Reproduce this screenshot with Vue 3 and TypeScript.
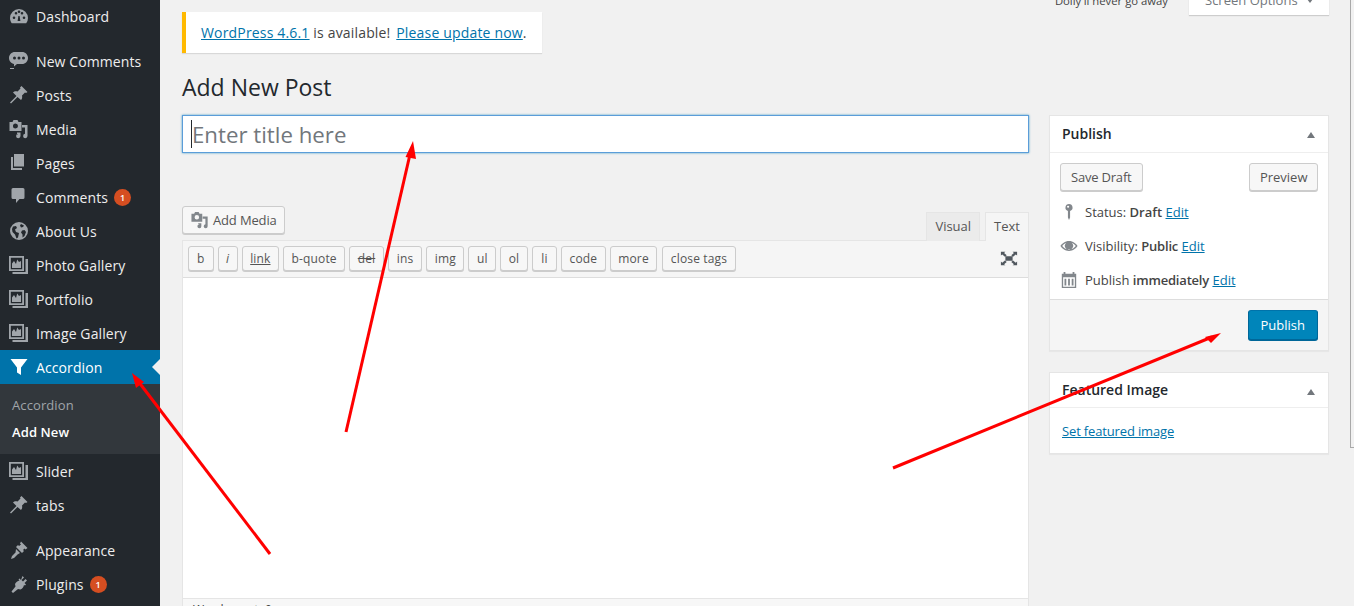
<script setup lang="ts">
type MenuItem = { label: string; icon: string; badge?: number }

const ICONS: Record<string, string> = {
  dash: 'M10 3a9 9 0 0 0-9 9c0 2 .7 3.900 1.800 5.300h14.400A9 9 0 0 0 19 12a9 9 0 0 0-9-9zM5 13a1.300 1.300 0 1 1 0-2.600A1.300 1.300 0 0 1 5 13zm2-4.400a1.300 1.300 0 1 1 0-2.600 1.300 1.300 0 0 1 0 2.600zM10 7a1.300 1.300 0 1 1 0-2.600A1.300 1.300 0 0 1 10 7zm1.400 8H8.600l.8-5h1.200zM13 8.600A1.300 1.300 0 1 1 13 6a1.300 1.300 0 0 1 0 2.600zM15 13a1.300 1.300 0 1 1 0-2.600A1.300 1.300 0 0 1 15 13z',
  bubble: 'M6 1h7c3.500 0 6 2.700 6 6s-2.500 6-6 6H8l-3 2.500V13C2.500 12.500 0 10.300 0 7s2.500-6 6-6zm-.5 4.500a1.500 1.500 0 1 0 0 3 1.500 1.500 0 0 0 0-3zm4.500 0a1.500 1.500 0 1 0 0 3 1.500 1.500 0 0 0 0-3zm4.500 0a1.500 1.500 0 1 0 0 3 1.500 1.500 0 0 0 0-3zM1 17h4v1H1z',
  pin: 'M12.500 1l6 6-1.500 1-1-.5-3 3c.5 2 0 3.500-1 4.500L8.500 12 2 18.500l-1-1L7.500 11 4 7.500C5 6.500 6.500 6 8.500 6.500l3-3-.5-1z',
  media: 'M.5 3h3l1-2h4l1 2h3v9H.5zm6 1.500a2.500 2.500 0 1 0 0 5 2.500 2.500 0 0 0 0-5zM13 6h5.500v11a2.200 2.200 0 1 1-2.500-2.200V8.500h-3zM8 13.500h3.500v3.500a2.200 2.200 0 1 1-2.500-2.200v.7H8z',
  pages: 'M5 1h10v12.500H5zM2 4h2v11h9v2H2z',
  comment: 'M4 1h10a1.500 1.500 0 0 1 1.500 1.500v8A1.500 1.500 0 0 1 14 12h-3.500L7 16v-4H4a1.500 1.500 0 0 1-1.500-1.500v-8A1.500 1.500 0 0 1 4 1z',
  globe: 'M10 1a9 9 0 1 0 0 18 9 9 0 0 0 0-18zM4 5.500l3-.5 1 2-2 1.500 1 2.500 3 1-1 4.500-1.500 1-1.500-4-2.500-2.500-.5-3zM12 3l3 1.500-1 1.500-2 .5-1-2zm3.500 6l1.500 2-1.500 4-2 1.500v-3l-1.500-2 1-2z',
  gallery: 'M0 1h15v15H0zm1.800 1.800v11.400h11.400V2.800zM3 13V8.500l2-2.500 2 3 1.200-4.500L10 7l2-1v7zm13.500-9H19v15H3.500v-2h13z',
  funnel: 'M1.500 2h17L12 10.500V18l-4-2.500v-5z',
  brush: 'M12 1.500l6.500 6.500-2 1.500-1-1-1.500 1.500 1 1-2 2-6-6 2-2 1 1L12 4.500l-1-1zM7 9l4 4-2.500 1.500L5 18l-3 1 1-3 3.500-3.500z',
  plug: 'M13.500 2L15 3.500 12.500 6 14 7.500 16.500 5 18 6.500 15.500 9 17 10.500l-1 1L15 11c-.5 2-1.500 3.500-3.500 4.500L9 15l-5 4-1.500-1.500 4-5L6 10c1-2 2.500-3 4.500-3.500l-1-1 1-1L12 6z',
}

const topItems: MenuItem[] = [
  { label: 'New Comments', icon: 'bubble' },
  { label: 'Posts', icon: 'pin' },
  { label: 'Media', icon: 'media' },
  { label: 'Pages', icon: 'pages' },
  { label: 'Comments', icon: 'comment', badge: 1 },
  { label: 'About Us', icon: 'globe' },
  { label: 'Photo Gallery', icon: 'gallery' },
  { label: 'Portfolio', icon: 'gallery' },
  { label: 'Image Gallery', icon: 'gallery' },
]
const afterItems: MenuItem[] = [
  { label: 'Slider', icon: 'gallery' },
  { label: 'tabs', icon: 'pin' },
]
const bottomItems: MenuItem[] = [
  { label: 'Appearance', icon: 'brush' },
  { label: 'Plugins', icon: 'plug', badge: 1 },
]

const quicktags = ['b', 'i', 'link', 'b-quote', 'del', 'ins', 'img', 'ul', 'ol', 'li', 'code', 'more', 'close tags']

const arrows = [
  { line: '346,432 411,150', head: '413,141 405.500,157 416,159' },
  { line: '270,554 138,381', head: '132,373 136,388 144,382' },
  { line: '893,468 1212,337', head: '1221,333 1205,337 1211,343' },
]
</script>

<template>
  <div class="page">
    <aside class="sidebar">
      <div class="menu-item first">
        <svg class="mi" viewBox="0 0 20 20"><path :d="ICONS.dash" fill-rule="evenodd" /></svg>
        <span>Dashboard</span>
      </div>
      <div class="sep"></div>
      <div v-for="it in topItems" :key="it.label" class="menu-item">
        <svg class="mi" viewBox="0 0 20 20"><path :d="ICONS[it.icon]" fill-rule="evenodd" /></svg>
        <span>{{ it.label }}</span>
        <b v-if="it.badge" class="badge">{{ it.badge }}</b>
      </div>
      <div class="menu-item current">
        <svg class="mi" viewBox="0 0 20 20"><path :d="ICONS.funnel" /></svg>
        <span>Accordion</span>
        <i class="notch"></i>
      </div>
      <div class="submenu">
        <div class="sub-head">Accordion</div>
        <div class="sub-link">Add New</div>
      </div>
      <div v-for="it in afterItems" :key="it.label" class="menu-item">
        <svg class="mi" viewBox="0 0 20 20"><path :d="ICONS[it.icon]" fill-rule="evenodd" /></svg>
        <span>{{ it.label }}</span>
      </div>
      <div class="sep"></div>
      <div v-for="it in bottomItems" :key="it.label" class="menu-item">
        <svg class="mi" viewBox="0 0 20 20"><path :d="ICONS[it.icon]" fill-rule="evenodd" /></svg>
        <span>{{ it.label }}</span>
        <b v-if="it.badge" class="badge">{{ it.badge }}</b>
      </div>
    </aside>

    <main class="content">
      <div class="topline">
        <span class="dolly">Dolly'll never go away</span>
        <div class="screen-tab">Screen Options <em class="tri-down"></em></div>
      </div>

      <div class="notice">
        <a href="#">WordPress 4.6.1</a> is available! <a class="update" href="#">Please update now</a>.
      </div>

      <h1 class="title">Add New Post</h1>

      <div class="columns">
        <div class="main-col">
          <div class="title-input"><i class="caret"></i>Enter title here</div>

          <div class="media-row">
            <button class="btn media-btn">
              <svg class="media-ico" viewBox="0 0 20 20"><path :d="ICONS.media" fill-rule="evenodd" /></svg>
              Add Media
            </button>
            <div class="tabs">
              <div class="tab">Visual</div>
              <div class="tab active">Text</div>
            </div>
          </div>

          <div class="editor">
            <div class="toolbar">
              <button
                v-for="q in quicktags"
                :key="q"
                class="qt"
                :class="'qt-' + q.replace(' ', '-')"
              >{{ q }}</button>
              <svg class="fullscreen" viewBox="0 0 20 20" preserveAspectRatio="none">
                <path d="M6 7h8v6H6zM1 1h5L4.500 2.500 7.500 5.500 5.500 7.500 2.500 4.500 1 6zM19 1v5l-1.500-1.500-3 3-2-2 3-3L14 1zM1 19v-5l1.500 1.500 3-3 2 2-3 3L6 19zM19 19h-5l1.500-1.500-3-3 2-2 3 3L19 14z" />
              </svg>
            </div>
            <div class="editor-body"></div>
            <div class="editor-foot">Word count: 0</div>
          </div>
        </div>

        <div class="side-col">
          <section class="box">
            <header class="box-head">Publish <em class="tri-up"></em></header>
            <div class="pub-actions">
              <button class="btn save">Save Draft</button>
              <button class="btn preview">Preview</button>
            </div>
            <div class="pub-row">
              <svg class="pub-ico" viewBox="0 0 20 20"><path d="M10 1a4 4 0 0 1 1.200 7.800V16L10 19l-1.200-3V8.800A4 4 0 0 1 10 1zM9 3a1.200 1.200 0 1 0 0 2.400A1.200 1.200 0 0 0 9 3z" fill-rule="evenodd" /></svg>
              <span>Status: <b>Draft</b> <a href="#">Edit</a></span>
            </div>
            <div class="pub-row">
              <svg class="pub-ico" viewBox="0 0 20 20"><path d="M10 4.500c4.500 0 8 3 9.500 5.500-1.500 2.500-5 5.500-9.500 5.500S2 12.500.5 10C2 7.500 5.500 4.500 10 4.500zM2.500 10c1.500 2 4 4 7.500 4s6-2 7.500-4c-1-1.500-2.500-2.700-4.300-3.400a4.500 4.500 0 1 1-6.400 0C5 7.300 3.500 8.500 2.500 10z" fill-rule="evenodd" /></svg>
              <span>Visibility: <b class="tight">Public</b> <a href="#">Edit</a></span>
            </div>
            <div class="pub-row">
              <svg class="pub-ico" viewBox="0 0 20 20"><path d="M2 3h2V1h2v2h8V1h2v2h2v16H2zm1.500 4v10.500h13V7zM5 8.500h2V16H5zm4 0h2V16H9zm4 0h2V16h-2z" fill-rule="evenodd" /></svg>
              <span>Publish <b class="tight">immediately</b> <a href="#">Edit</a></span>
            </div>
            <div class="pub-foot">
              <button class="btn primary">Publish</button>
            </div>
          </section>

          <section class="box">
            <header class="box-head short">Featured Image <em class="tri-up"></em></header>
            <div class="feat-body"><a href="#">Set featured image</a></div>
          </section>
        </div>
      </div>
    </main>

    <div class="scroll-thumb"></div>

    <svg class="arrows" viewBox="0 0 1354 606">
      <g v-for="(a, i) in arrows" :key="i">
        <polyline :points="a.line" fill="none" stroke="#f00" stroke-width="3" />
        <polygon :points="a.head" fill="#f00" />
      </g>
    </svg>
  </div>
</template>

<style>
html, body { margin: 0; background: #f1f1f1; }
</style>

<style scoped>
.page {
  position: relative;
  display: flex;
  width: 1354px;
  height: 606px;
  overflow: hidden;
  background: #f1f1f1;
  font-family: "Open Sans", "Noto Sans", sans-serif;
  font-size: 13px;
  color: #444;
}

.sidebar {
  width: 160px;
  flex: none;
  background: #23282d;
  color: #eee;
  font-size: 14px;
  letter-spacing: 0.1px;
}

.menu-item {
  position: relative;
  display: flex;
  align-items: center;
  height: 34px;
  padding-left: 36px;
}
.menu-item.first { margin-top: -1px; }

.mi {
  position: absolute;
  left: 9px;
  top: 7px;
  width: 20px;
  height: 20px;
  fill: #a0a5aa;
}

.sep { height: 11px; }

.badge {
  display: inline-block;
  margin-left: 6px;
  width: 17px;
  height: 17px;
  border-radius: 50%;
  background: #d54e21;
  color: #fff;
  font-size: 9px;
  font-weight: 600;
  line-height: 17px;
  text-align: center;
}

.current {
  background: #0073aa;
  color: #fff;
}
.current .mi { fill: #fff; }

.notch {
  position: absolute;
  right: 0;
  top: 9px;
  border: 8px solid transparent;
  border-right-color: #f1f1f1;
  border-left-width: 0;
}

.submenu {
  height: 70px;
  padding-top: 12px;
  box-sizing: border-box;
  background: #32373c;
  font-size: 13px;
}
.sub-head {
  padding-left: 12px;
  height: 27px;
  line-height: 19px;
  color: #a0a5aa;
}
.sub-link {
  padding-left: 12px;
  line-height: 19px;
  color: #fff;
  font-weight: 600;
}

.content {
  flex: 1;
  min-width: 0;
  padding: 0 25px 0 22px;
}

.topline {
  display: flex;
  justify-content: flex-end;
  align-items: flex-start;
  height: 16px;
  margin-top: -12px;
  gap: 21px;
}
.dolly {
  padding-top: 5px;
  font-size: 11.300px;
  line-height: 16px;
  color: #444;
}
.screen-tab {
  flex: none;
  box-sizing: border-box;
  width: 140px;
  height: 27px;
  background: #fff;
  box-shadow: 0 1px 1px rgba(0, 0, 0, 0.15);
  color: #72777c;
  font-size: 13px;
  line-height: 24px;
  text-align: center;
}

.tri-down {
  display: inline-block;
  margin-left: 6px;
  vertical-align: 2px;
  border: 3.500px solid transparent;
  border-top: 4px solid #72777c;
  border-bottom-width: 0;
}
.tri-up {
  position: absolute;
  right: 13px;
  top: 16px;
  border: 4.500px solid transparent;
  border-bottom: 6px solid #72777c;
  border-top-width: 0;
}

.notice {
  box-sizing: border-box;
  width: 360px;
  height: 41px;
  margin-top: 8px;
  padding-left: 15px;
  border-left: 4px solid #ffb900;
  background: #fff;
  box-shadow: 0 1px 1px rgba(0, 0, 0, 0.1);
  font-size: 14px;
  letter-spacing: 0.17px;
  line-height: 41px;
  white-space: nowrap;
}
.update { margin-left: 2px; }

a { color: #0073aa; text-decoration: underline; }

.title {
  margin: 20px 0 13px;
  font-size: 23px;
  font-weight: 400;
  line-height: 29px;
  color: #23282d;
}

.columns {
  display: flex;
  gap: 20px;
  align-items: flex-start;
}
.main-col { width: 847px; flex: none; }
.side-col { width: 280px; flex: none; }

.title-input {
  box-sizing: border-box;
  display: flex;
  align-items: center;
  height: 38px;
  padding: 1px 0 0 8px;
  background: #fff;
  border: 1px solid #5b9dd9;
  box-shadow: 0 0 2px rgba(30, 140, 190, 0.8);
  font-size: 22.250px;
  color: #72777c;
}
.caret {
  width: 1px;
  height: 28px;
  margin-top: -1px;
  background: #23282d;
}

.media-row {
  display: flex;
  justify-content: space-between;
  align-items: flex-end;
  margin-top: 53px;
  height: 35px;
}

.btn {
  box-sizing: border-box;
  height: 28px;
  padding: 0 10px;
  border: 1px solid #ccc;
  border-radius: 3px;
  background: #f7f7f7;
  box-shadow: 0 1px 0 #ccc;
  color: #555;
  font-family: inherit;
  font-size: 13px;
  line-height: 26px;
}
.save { letter-spacing: -0.2px; }
.preview { padding: 0 9.500px; }
.media-btn {
  display: flex;
  align-items: center;
  padding: 0 7px 0 8px;
  margin-bottom: 7px;
  letter-spacing: -0.15px;
}
.media-ico {
  width: 18px;
  height: 18px;
  margin-right: 4px;
  fill: #82878c;
}

.tabs {
  display: flex;
  gap: 5px;
}
.tab {
  box-sizing: border-box;
  height: 29px;
  padding: 0 8px;
  background: #ebebeb;
  border: 1px solid #e5e5e5;
  border-bottom: 0;
  color: #555;
  line-height: 27px;
}
.tab.active {
  background: #f5f5f5;
  margin-bottom: -1px;
  height: 30px;
}

.editor {
  box-sizing: border-box;
  height: 370px;
  background: #fff;
  border: 1px solid #e5e5e5;
  margin-top: -1px;
}

.toolbar {
  position: relative;
  display: flex;
  gap: 4px;
  box-sizing: border-box;
  height: 37px;
  padding: 5px 5px 0;
  background: #f5f5f5;
  border-bottom: 1px solid #ddd;
}

.qt {
  box-sizing: border-box;
  height: 25px;
  padding: 0 7.500px;
  border: 1px solid #ccc;
  border-radius: 3px;
  background: #f7f7f7;
  box-shadow: 0 1px 0 #ccc;
  color: #555;
  font-family: inherit;
  font-size: 12px;
  letter-spacing: 0.15px;
  line-height: 22px;
}
.qt-b { padding: 0 8px; }
.qt-i { font-style: italic; }
.qt-link { text-decoration: underline; }
.qt-del { text-decoration: line-through; }
.qt-ins { padding: 0 8px; }
.qt-li { padding: 0 8.500px; }
.qt-close-tags { margin-left: 1px; }

.fullscreen {
  position: absolute;
  right: 10px;
  top: 10px;
  width: 18px;
  height: 15px;
  fill: #50575e;
}

.editor-body { height: 320px; background: #fff; }

.editor-foot {
  height: 30px;
  padding-left: 10px;
  background: #f7f7f7;
  border-top: 1px solid #e5e5e5;
  font-size: 12px;
  line-height: 22px;
  color: #444;
}

.box {
  background: #fff;
  border: 1px solid #e5e5e5;
  box-shadow: 0 1px 1px rgba(0, 0, 0, 0.04);
  margin-bottom: 21px;
}

.box-head {
  position: relative;
  height: 36px;
  padding-left: 12px;
  border-bottom: 1px solid #eee;
  font-size: 14px;
  font-weight: 600;
  line-height: 35px;
  color: #23282d;
}
.box-head.short { height: 34px; line-height: 34px; }

.pub-actions {
  display: flex;
  justify-content: space-between;
  padding: 10px 10px 0;
  height: 28px;
  margin-bottom: 4px;
}

.pub-row {
  display: flex;
  align-items: center;
  height: 34px;
  padding-left: 10px;
}
.pub-row b { font-weight: 600; }
.pub-row b.tight { letter-spacing: -0.2px; }
.pub-ico {
  width: 18px;
  height: 20px;
  margin-right: 7px;
  fill: #82878c;
  flex: none;
}

.pub-foot {
  display: flex;
  justify-content: flex-end;
  box-sizing: border-box;
  height: 51px;
  margin-top: 2px;
  padding: 10px 10px 0;
  background: #f5f5f5;
  border-top: 1px solid #ddd;
}
.primary {
  height: 30px;
  padding: 0 12px;
  background: #0085ba;
  border-color: #0073aa #006799 #006799;
  box-shadow: 0 1px 0 #006799;
  color: #fff;
}

.feat-body {
  height: 45px;
  padding: 14px 12px 0;
  box-sizing: border-box;
  letter-spacing: -0.15px;
}

.scroll-thumb {
  position: absolute;
  top: 0;
  right: 0;
  box-sizing: border-box;
  width: 4px;
  height: 448px;
  border-left: 1px solid #a9a9a9;
  border-bottom: 1px solid #a9a9a9;
}

.arrows {
  position: absolute;
  inset: 0;
  width: 1354px;
  height: 606px;
  pointer-events: none;
}
</style>
